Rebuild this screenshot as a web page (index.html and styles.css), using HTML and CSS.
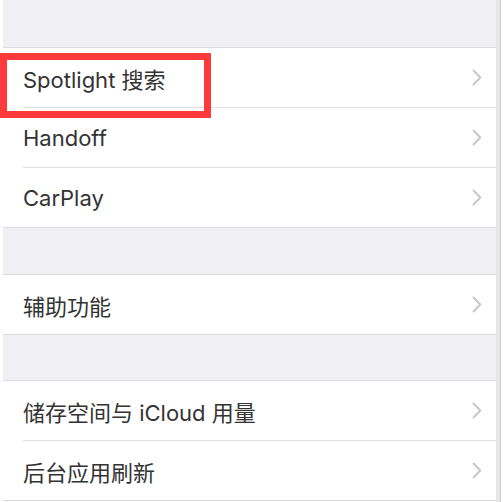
FILE: index.html
```html
<!DOCTYPE html>
<html>

<head lang="zh">
    <meta charset="UTF-8">
    <title>设置</title>
    <link rel="stylesheet" href="styles.css">
</head>

<body>

    <div class="page">
        <div class="list">

            <div class="gap gap-top"></div>
            <div class="group">
                <a class="row" href="#">
                    <span class="label">Spotlight 搜索</span>
                    <svg class="chev" width="10" height="17" viewBox="0 0 10 17"><path d="M1.5 1.5 L8.3 8.5 L1.5 15.5" /></svg>
                </a>
                <a class="row" href="#">
                    <span class="label">Handoff</span>
                    <svg class="chev" width="10" height="17" viewBox="0 0 10 17"><path d="M1.5 1.5 L8.3 8.5 L1.5 15.5" /></svg>
                </a>
                <a class="row" href="#">
                    <span class="label">CarPlay</span>
                    <svg class="chev" width="10" height="17" viewBox="0 0 10 17"><path d="M1.5 1.5 L8.3 8.5 L1.5 15.5" /></svg>
                </a>
            </div>

            <div class="gap gap-mid"></div>
            <div class="group">
                <a class="row" href="#">
                    <span class="label">辅助功能</span>
                    <svg class="chev" width="10" height="17" viewBox="0 0 10 17"><path d="M1.5 1.5 L8.3 8.5 L1.5 15.5" /></svg>
                </a>
            </div>

            <div class="gap gap-low"></div>
            <div class="group">
                <a class="row" href="#">
                    <span class="label">储存空间与 iCloud 用量</span>
                    <svg class="chev" width="10" height="17" viewBox="0 0 10 17"><path d="M1.5 1.5 L8.3 8.5 L1.5 15.5" /></svg>
                </a>
                <a class="row" href="#">
                    <span class="label">后台应用刷新</span>
                    <svg class="chev" width="10" height="17" viewBox="0 0 10 17"><path d="M1.5 1.5 L8.3 8.5 L1.5 15.5" /></svg>
                </a>
            </div>

        </div>
        <div class="rail"></div>
    </div>

    <!-- 标注框 -->
    <div class="mark"></div>

</body>

</html>
```

FILE: styles.css
```css
body {
    margin: 0;
    background: #fff;
    font-family: Inter, "Noto Sans CJK SC", sans-serif;
}

.page {
    display: flex;
    height: 502px;
    padding-left: 3px;
    padding-right: 2px;
    overflow: hidden;
}

.list {
    flex: 1;
}

.rail {
    width: 4px;
    background: #e6e6ea;
    border-right: 1px solid #cfcfd3;
}

.gap {
    background: #f0eff4;
}

.gap-top {
    height: 47px;
}

.gap-mid {
    height: 46px;
}

.gap-low {
    height: 45px;
}

.group {
    background: #fff;
    border-top: 1px solid #dcdce0;
    border-bottom: 1px solid #dcdce0;
}

.row {
    display: flex;
    align-items: center;
    justify-content: space-between;
    height: 59px;
    margin-left: 20px;
    padding-right: 14px;
    text-decoration: none;
}

.row + .row {
    border-top: 1px solid #e0e0e4;
}

.label {
    font-size: 22px;
    color: #333;
}

.chev path {
    fill: none;
    stroke: #c7c7cc;
    stroke-width: 2;
    stroke-linecap: round;
    stroke-linejoin: round;
}

.mark {
    position: absolute;
    left: 0;
    top: 53px;
    width: 211px;
    height: 65px;
    box-sizing: border-box;
    border: 7px solid #fd3b3b;
}
```
